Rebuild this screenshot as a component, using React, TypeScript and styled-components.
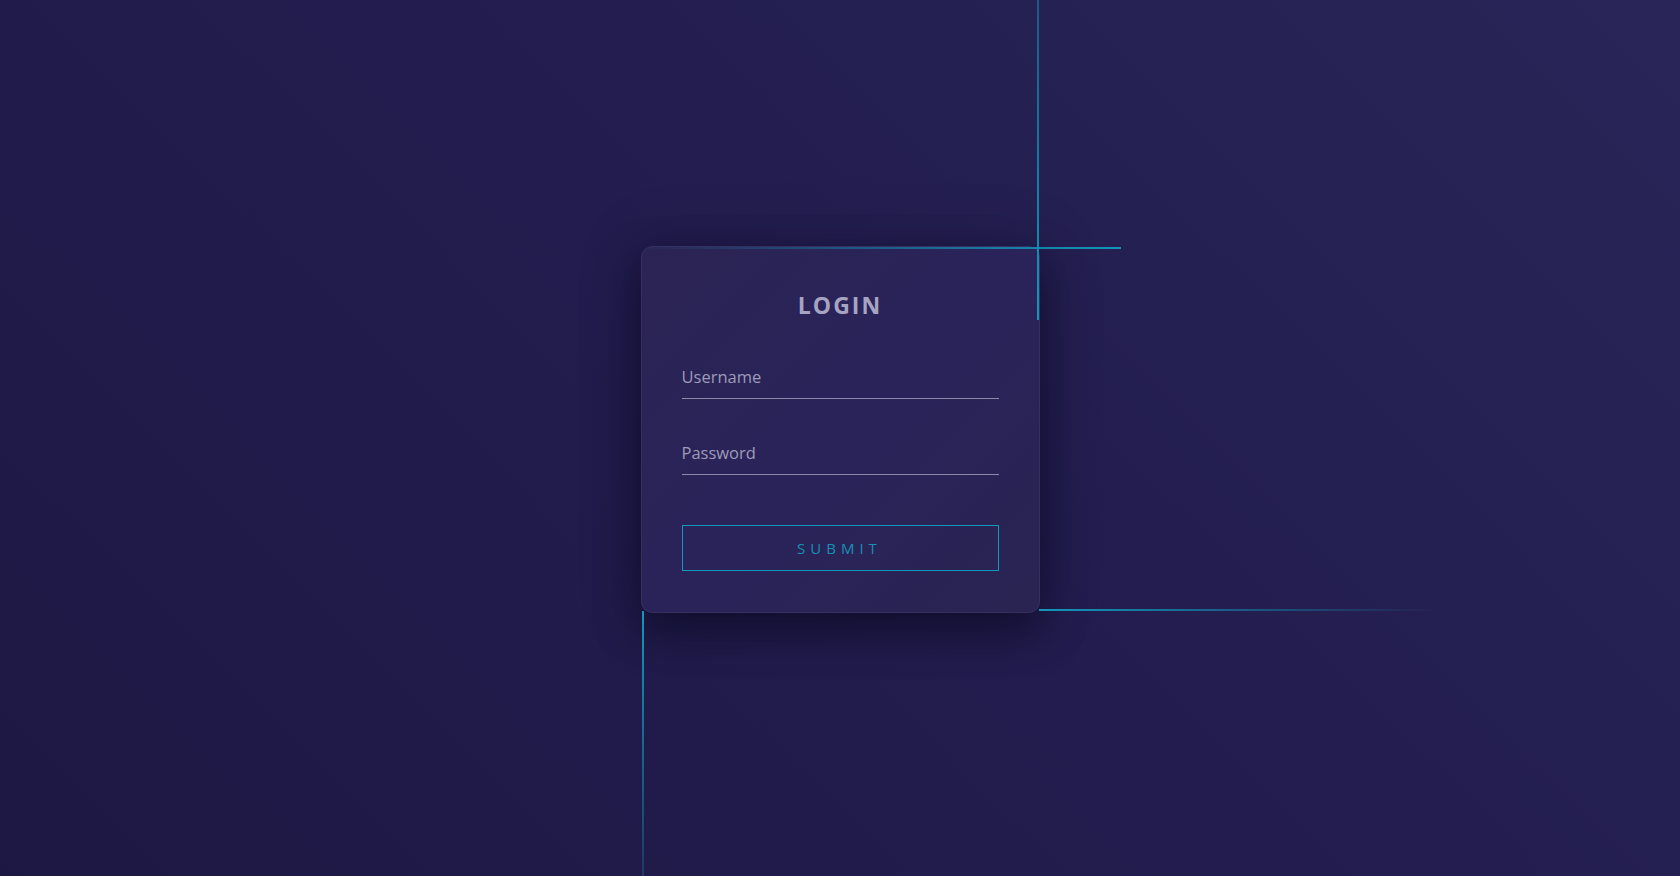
import React from 'react';
import styled, { createGlobalStyle } from 'styled-components';

const GlobalStyle = createGlobalStyle`
  * {
    box-sizing: border-box;
  }
  html,
  body {
    margin: 0;
    padding: 0;
    height: 100%;
    overflow: hidden;
  }
  body {
    font-family: 'Open Sans', 'Noto Sans', sans-serif;
    background: linear-gradient(45deg, #1d1843 0%, #221d4e 50%, #2a2558 100%);
  }
`;

const accent = '#1198ba';

const Page = styled.main`
  height: 100vh;
  overflow: hidden;
  display: flex;
  align-items: center;
  justify-content: center;
  padding-bottom: 17px;
`;

const Card = styled.form`
  position: relative;
  width: 399px;
  padding: 40px 40px 41px;
  display: flex;
  flex-direction: column;
  background: linear-gradient(135deg, #2b2453 0%, #29235a 50%, #2a2452 100%);
  border: 1px solid rgba(255, 255, 255, 0.06);
  border-radius: 12px;
  box-shadow: 0 18px 40px rgba(10, 8, 30, 0.55), 0 0 60px rgba(10, 8, 30, 0.25);
`;

// decorative light strokes hugging the card edges
const Line = styled.span<{ $dir: 'right' | 'left' | 'down' | 'up' }>`
  position: absolute;
  pointer-events: none;
  ${({ $dir }) =>
    $dir === 'right' || $dir === 'left'
      ? `height: 2px; width: 400px;`
      : `width: 2px; height: 400px;`}
  background: ${({ $dir }) => {
    switch ($dir) {
      case 'right':
        return `linear-gradient(to right, transparent, ${accent})`;
      case 'left':
        return `linear-gradient(to right, ${accent}, transparent)`;
      case 'down':
        return `linear-gradient(to bottom, rgba(17,152,186,0.35), ${accent})`;
      default:
        return `linear-gradient(to bottom, ${accent}, rgba(17,152,186,0.15))`;
    }
  }};
`;

const TopLine = styled(Line)`
  top: 0;
  left: -1px;
  width: 480px;
`;

const RightLine = styled(Line)`
  right: 0;
  top: -327px;
`;

const BottomLine = styled(Line)`
  top: 362px;
  left: 397px;
`;

const LeftLine = styled(Line)`
  left: 0;
  top: 364px;
  height: 300px;
`;

const Title = styled.h2`
  margin: 3px 0 38px;
  height: 30px;
  line-height: 30px;
  text-align: center;
  font-size: 23px;
  font-weight: 700;
  letter-spacing: 2px;
  color: #a7a4c3;
`;

const Field = styled.label<{ $last?: boolean }>`
  display: flex;
  align-items: flex-end;
  height: 41px;
  margin-bottom: ${({ $last }) => ($last ? '50px' : '35px')};
  border-bottom: 1.5px solid #8c89aa;
`;

const Input = styled.input`
  width: 100%;
  border: none;
  outline: none;
  background: transparent;
  padding: 0 0 10px;
  font-family: 'Open Sans', 'Noto Sans', sans-serif;
  font-size: 16.5px;
  color: #a6a3c1;
  &::placeholder {
    color: #9e9bba;
  }
`;

const Submit = styled.button`
  height: 46px;
  width: 100%;
  background: transparent;
  border: 1px solid ${accent};
  color: #1591b2;
  font-family: 'Open Sans', 'Noto Sans', sans-serif;
  font-size: 15px;
  letter-spacing: 5px;
  padding-left: 5px;
  cursor: pointer;
`;

export default function App() {
  return (
    <>
      <GlobalStyle />
      <Page>
        <Card onSubmit={(e) => e.preventDefault()}>
          <TopLine $dir="right" />
          <RightLine $dir="down" />
          <BottomLine $dir="left" />
          <LeftLine $dir="up" />
          <Title>LOGIN</Title>
          <Field>
            <Input type="text" placeholder="Username" />
          </Field>
          <Field $last>
            <Input type="password" placeholder="Password" />
          </Field>
          <Submit type="submit">SUBMIT</Submit>
        </Card>
      </Page>
    </>
  );
}
